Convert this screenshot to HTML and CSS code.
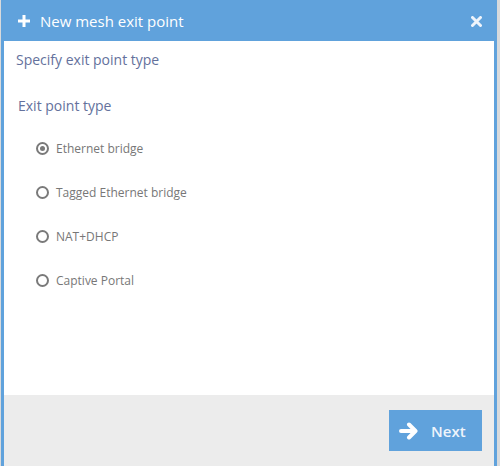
FILE: index.html
```html
<!DOCTYPE html>
<html>
<head>
<meta charset="utf-8">
<link rel="stylesheet" href="styles.css">
</head>
<body>
<div class="window">
  <div class="header">
    <svg class="plus" width="12" height="12" viewBox="0 0 12 12"><path d="M4.5 0h3v4.5H12v3H7.5V12h-3V7.5H0v-3h4.5z" fill="#fff"/></svg>
    <span class="title">New mesh exit point</span>
    <svg class="close" width="11" height="11" viewBox="0 0 11 11"><path d="M1.5 1.5L9.5 9.5M9.5 1.5L1.5 9.5" stroke="#eef4fb" stroke-width="3" stroke-linecap="round"/></svg>
  </div>
  <div class="content">
    <div class="subtitle">Specify exit point type</div>
    <div class="section">Exit point type</div>
    <div class="options">
      <label class="opt"><span class="radio checked"></span><span>Ethernet bridge</span></label>
      <label class="opt"><span class="radio"></span><span>Tagged Ethernet bridge</span></label>
      <label class="opt"><span class="radio"></span><span>NAT+DHCP</span></label>
      <label class="opt"><span class="radio"></span><span>Captive Portal</span></label>
    </div>
  </div>
  <div class="footer">
    <div class="btn">
      <svg width="20" height="18" viewBox="0 0 20 18"><path d="M2 9H16M10 2.5L16.5 9L10 15.5" stroke="#fff" stroke-width="4" fill="none" stroke-linecap="round" stroke-linejoin="round"/></svg>
      <span>Next</span>
    </div>
  </div>
</div>
</body>
</html>
```
FILE: styles.css
```css
html, body {
  margin: 0;
  padding: 0;
}
body {
  width: 500px;
  height: 466px;
  overflow: hidden;
  background: #d8dadc;
  font-family: "Open Sans", "Noto Sans", sans-serif;
}
.window {
  margin-left: 1px;
  width: 490px;
  height: 466px;
  background: #60a2dc;
  padding: 0 3px;
  display: flex;
  flex-direction: column;
}
.header {
  height: 41px;
  display: flex;
  align-items: center;
  padding: 0 12px 0 14px;
  color: #fff;
  flex-shrink: 0;
}
.plus {
  margin-right: 10px;
}
.title {
  font-size: 15px;
  font-weight: 500;
  flex: 1;
}
.close {
  margin-top: 1px;
}
.content {
  background: #fff;
  height: 354px;
  flex-shrink: 0;
}
.subtitle {
  color: #64719c;
  font-size: 14px;
  padding: 9px 0 0 12px;
  line-height: 19px;
}
.section {
  color: #64719c;
  font-size: 14px;
  padding: 27px 0 0 14px;
  line-height: 19px;
}
.options {
  padding: 25px 0 0 32px;
  display: flex;
  flex-direction: column;
  gap: 27px;
}
.opt {
  display: flex;
  align-items: center;
  height: 17px;
  font-size: 12px;
  color: #777;
}
.radio {
  width: 9px;
  height: 9px;
  border: 2px solid #7a7a7a;
  border-radius: 50%;
  margin-right: 7px;
  position: relative;
}
.radio.checked::after {
  content: "";
  position: absolute;
  left: 2px;
  top: 2px;
  width: 5px;
  height: 5px;
  border-radius: 50%;
  background: #7a7a7a;
}
.footer {
  background: #ececec;
  flex: 1;
  display: flex;
  justify-content: flex-end;
  align-items: flex-start;
  padding: 15px 12px 0 0;
}
.btn {
  width: 93px;
  height: 41px;
  background: #60a2dc;
  display: flex;
  align-items: center;
  padding-left: 10px;
  box-sizing: border-box;
  color: #eef4fb;
  font-size: 15px;
  font-weight: 600;
}
.btn svg {
  margin-right: 12px;
}
```
